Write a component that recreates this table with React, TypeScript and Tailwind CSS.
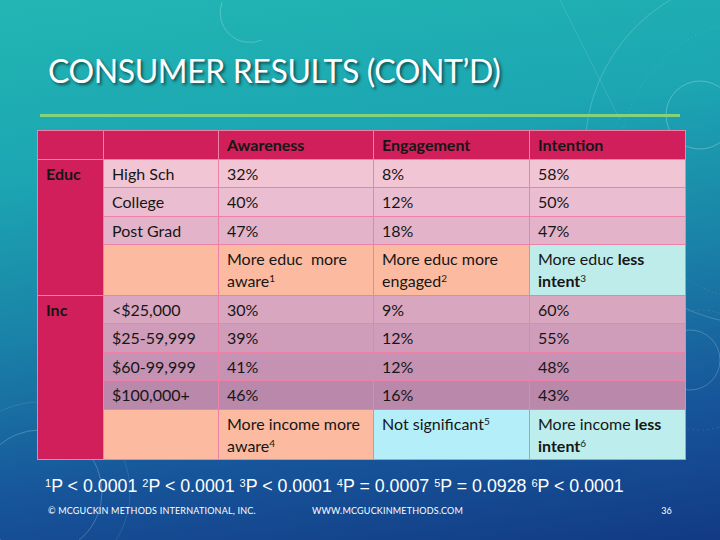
import React from "react";

type Row = {
  group?: { label: string; span: number };
  label: string;
  cells: React.ReactNode[];
  bg?: string;
  note?: boolean;
};

const Sup = ({ n }: { n: number }) => <sup className="text-[10px]">{n}</sup>;

const rows: Row[] = [
  { group: { label: "Educ", span: 4 }, label: "High Sch", cells: ["32%", "8%", "58%"], bg: "bg-[#f2c5d4]" },
  { label: "College", cells: ["40%", "12%", "50%"], bg: "bg-[#ebbdd0]" },
  { label: "Post Grad", cells: ["47%", "18%", "47%"], bg: "bg-[#e3b4c9]" },
  {
    label: "",
    note: true,
    cells: [
      <>
        More educ&nbsp; more aware<Sup n={1} />
      </>,
      <>
        More educ more engaged<Sup n={2} />
      </>,
      <>
        More educ <b>less intent</b>
        <Sup n={3} />
      </>,
    ],
  },
  { group: { label: "Inc", span: 5 }, label: "<$25,000", cells: ["30%", "9%", "60%"], bg: "bg-[#d9a6c0]" },
  { label: "$25-59,999", cells: ["39%", "12%", "55%"], bg: "bg-[#cf9cb9]" },
  { label: "$60-99,999", cells: ["41%", "12%", "48%"], bg: "bg-[#c592b3]" },
  { label: "$100,000+", cells: ["46%", "16%", "43%"], bg: "bg-[#b988aa]" },
  {
    label: "",
    note: true,
    cells: [
      <>
        More income more aware<Sup n={4} />
      </>,
      <>
        Not significant<Sup n={5} />
      </>,
      <>
        More income <b>less intent</b>
        <Sup n={6} />
      </>,
    ],
  },
];

// colour of the three note cells per note row: awareness, engagement, intention
const noteBg = [
  ["bg-[#fcbba1]", "bg-[#fcbba1]", "bg-[#bdecea]"],
  ["bg-[#fcbba1]", "bg-[#b4eef9]", "bg-[#bdeeed]"],
];

const pValues = [
  [1, "P < 0.0001"],
  [2, "P < 0.0001"],
  [3, "P < 0.0001"],
  [4, "P = 0.0007"],
  [5, "P = 0.0928"],
  [6, "P < 0.0001"],
] as const;

const Decor = () => (
  <svg className="absolute inset-0 h-full w-full" viewBox="0 0 720 540" fill="none">
    <g stroke="#ffffff" strokeOpacity="0.22" strokeWidth="1">
      <path d="M222 2 A30 30 0 0 0 262 40" />
      <circle cx="760" cy="150" r="175" strokeOpacity="0.18" />
      <circle cx="760" cy="160" r="140" strokeOpacity="0.14" strokeDasharray="1 3" />
      <circle cx="700" cy="115" r="34" strokeOpacity="0.25" />
      <path d="M560 0 L620 120" strokeOpacity="0.12" />
      <circle cx="690" cy="360" r="30" strokeOpacity="0.2" />
      <circle cx="700" cy="370" r="60" strokeOpacity="0.1" strokeDasharray="2 3" />
      <circle cx="40" cy="492" r="62" strokeOpacity="0.22" />
      <circle cx="40" cy="492" r="90" strokeOpacity="0.1" />
    </g>
  </svg>
);

export default function App() {
  const cell = "border border-[#ec82a8] px-[8px] py-[3px] text-left align-top";
  let noteIndex = 0;

  return (
    <div className="relative h-[540px] w-[720px] overflow-hidden bg-[linear-gradient(172deg,#22b6b3_0%,#1ca6b2_28%,#1a84a8_52%,#17559a_78%,#123a84_100%)] font-['Lato',sans-serif]">
      <Decor />

      <div className="relative flex flex-col pl-[37px] pt-[51px]">
        {/* Title */}
        <h1 className="pl-[11px] text-[32px] leading-[40px] font-normal tracking-[-0.4px] text-white [text-shadow:2px_2px_3px_rgba(0,0,0,0.55)]">
          CONSUMER RESULTS (CONT’D)
        </h1>

        {/* Green rule */}
        <div className="pb-[13px] pl-[3px] pt-[23px]">
          <div className="h-[3px] w-[640px] bg-[#84d27c]" />
        </div>

        {/* Table */}
        <table className="w-[648px] table-fixed border-collapse text-[16px] leading-[21.6px] text-[#161616]">
          <colgroup>
            <col className="w-[66px]" />
            <col className="w-[115px]" />
            <col className="w-[155px]" />
            <col className="w-[156px]" />
            <col className="w-[156px]" />
          </colgroup>
          <thead>
            <tr className="bg-[#d11f5b]">
              <th className={cell} />
              <th className={cell} />
              <th className={`${cell} font-bold`}>Awareness</th>
              <th className={`${cell} font-bold`}>Engagement</th>
              <th className={`${cell} font-bold`}>Intention</th>
            </tr>
          </thead>
          <tbody>
            {rows.map((r, i) => {
              const colours = r.note ? noteBg[noteIndex++] : null;
              return (
                <tr key={i}>
                  {r.group && (
                    <td rowSpan={r.group.span} className={`${cell} bg-[#d11f5b] font-bold`}>
                      {r.group.label}
                    </td>
                  )}
                  <td className={`${cell} ${r.note ? "bg-[#fcbba1]" : r.bg}`}>{r.label}</td>
                  {r.cells.map((c, j) => (
                    <td key={j} className={`${cell} ${colours ? colours[j] : r.bg}`}>
                      {c}
                    </td>
                  ))}
                </tr>
              );
            })}
          </tbody>
        </table>

        {/* Footnote p-values */}
        <p className="pl-[8px] pt-[16px] font-['Liberation_Sans',Arial,sans-serif] text-[17.8px] leading-[20px] text-white">
          {pValues.map(([n, t], i) => (
            <React.Fragment key={n}>
              <sup className="text-[11px]">{n}</sup>
              {t}
              {i < pValues.length - 1 ? " " : ""}
            </React.Fragment>
          ))}
        </p>

        {/* Footer */}
        <div className="flex items-center pl-[11px] pr-[48px] pt-[9px] text-[9px] leading-[12px] tracking-[0.2px] text-white">
          <span className="w-[264px]">© MCGUCKIN METHODS INTERNATIONAL, INC.</span>
          <span className="flex-1">WWW.MCGUCKINMETHODS.COM</span>
          <span>36</span>
        </div>
      </div>
    </div>
  );
}
